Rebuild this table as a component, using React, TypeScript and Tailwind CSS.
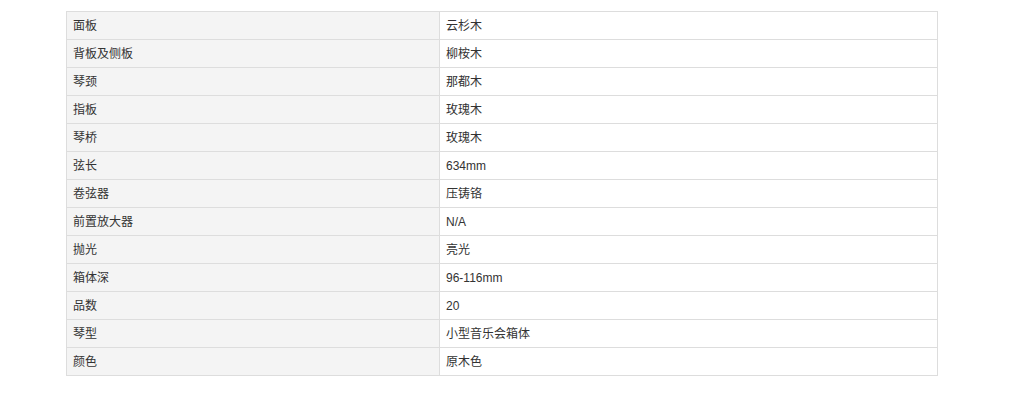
const rows: [string, string][] = [
  ["面板", "云杉木"],
  ["背板及侧板", "柳桉木"],
  ["琴颈", "那都木"],
  ["指板", "玫瑰木"],
  ["琴桥", "玫瑰木"],
  ["弦长", "634mm"],
  ["卷弦器", "压铸铬"],
  ["前置放大器", "N/A"],
  ["抛光", "亮光"],
  ["箱体深", "96-116mm"],
  ["品数", "20"],
  ["琴型", "小型音乐会箱体"],
  ["颜色", "原木色"],
];

export default function App() {
  return (
    <div
      className="w-[1017px] h-[403px] bg-white pt-[11px] pl-[66px]"
      style={{ fontFamily: '"Liberation Sans", Arial, "Noto Sans CJK SC", sans-serif' }}
    >
      <div className="w-[872px] border-t border-l border-r border-[#dddddd] text-[12px] text-[#333333]">
        {rows.map(([k, v]) => (
          <div key={k} className="flex h-[28px] border-b border-[#dddddd]">
            <div className="w-[373px] shrink-0 bg-[#f4f4f4] border-r border-[#dddddd] pl-[6px] flex items-center">
              {k}
            </div>
            <div className="flex-1 pl-[6px] flex items-center">{v}</div>
          </div>
        ))}
      </div>
    </div>
  );
}
